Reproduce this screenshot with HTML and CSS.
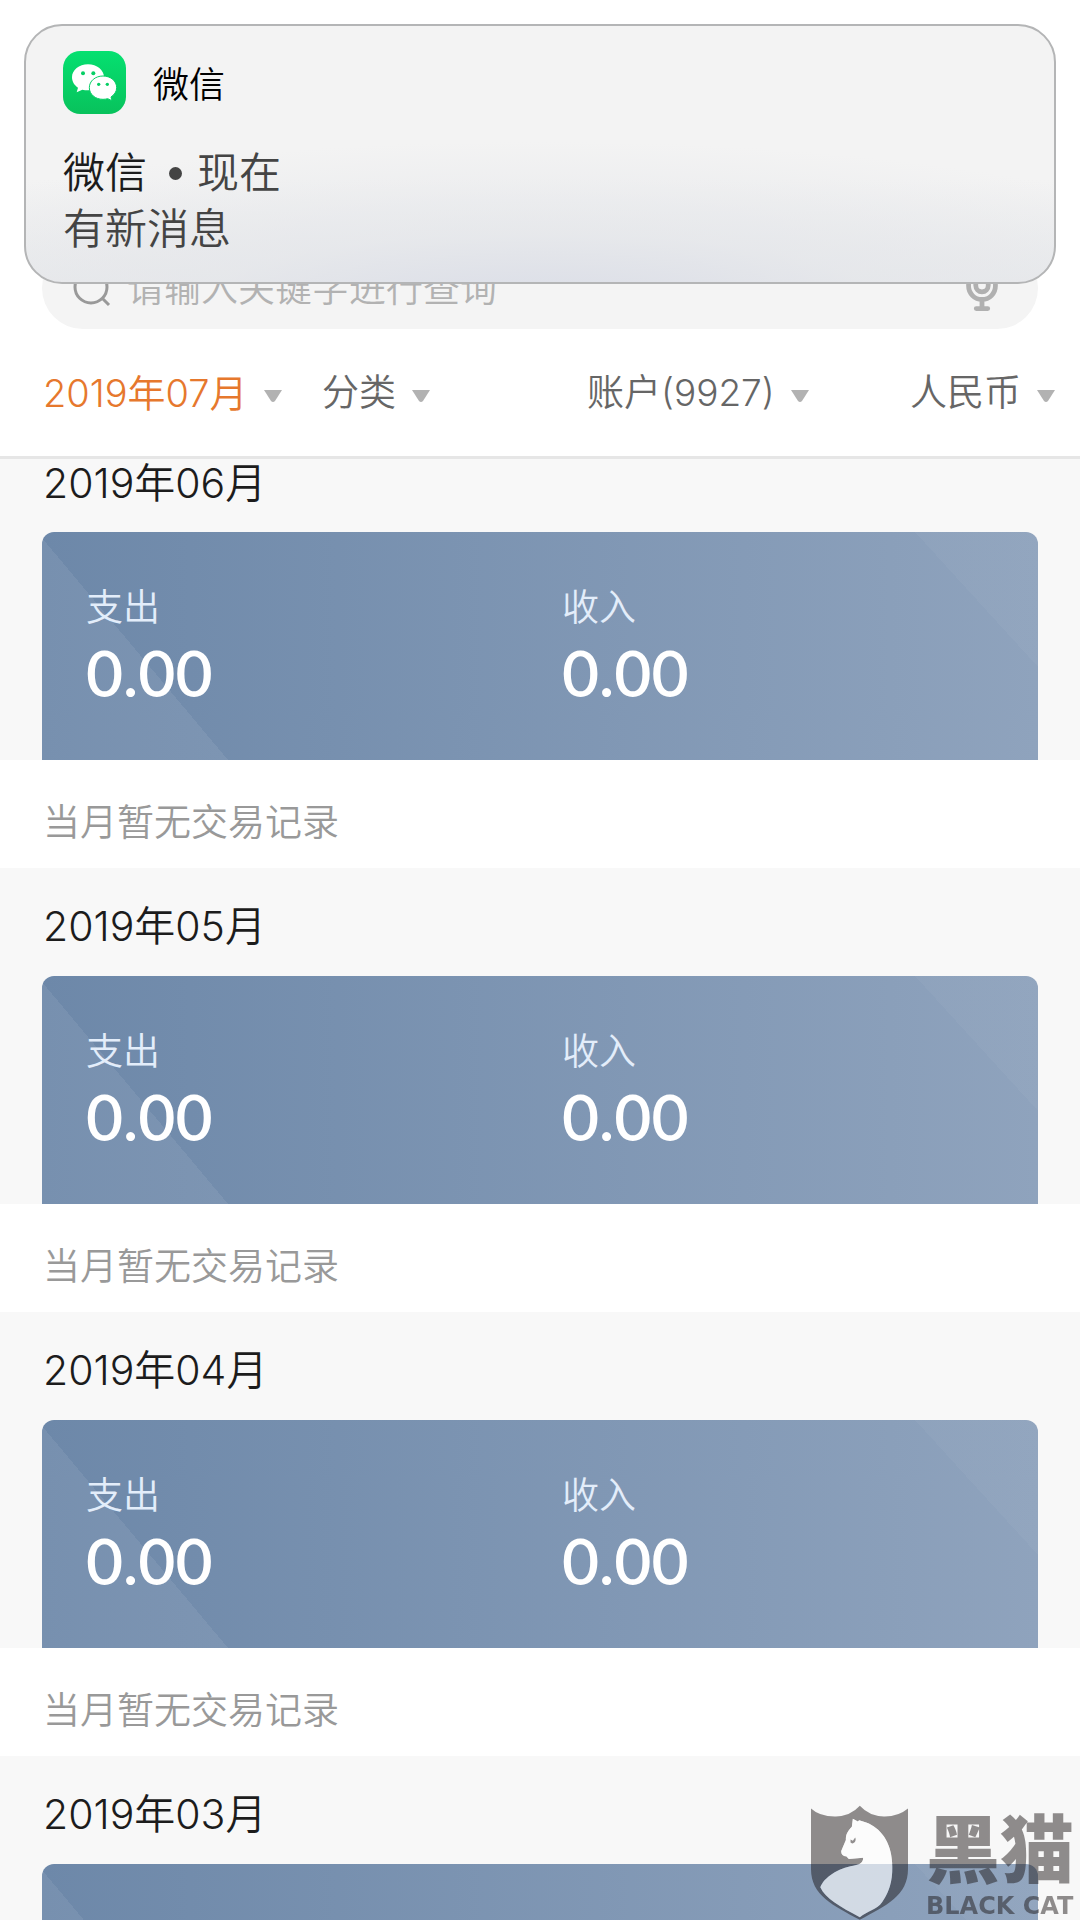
FILE: index.html
```html
<!DOCTYPE html>
<html lang="zh-CN">
<head>
<meta charset="utf-8">
<meta name="viewport" content="width=device-width, initial-scale=1">
<title>收支明细</title>
<link rel="stylesheet" href="styles.css">
</head>
<body>
<div class="app">
  <header class="header">
    <form class="search" role="search">
      <svg class="search-icon" viewBox="0 0 38 38" aria-hidden="true"><circle cx="18" cy="18" r="16"/><path d="M29 29l7 7"/></svg>
      <input class="search-input" type="search" placeholder="请输入关键字进行查询" aria-label="搜索">
      <button class="mic" type="button" aria-label="语音输入">
        <svg viewBox="0 0 32 48" aria-hidden="true"><rect x="9.500" y="2" width="13" height="26" rx="6.500"/><path d="M2 20v2a14 14 0 0 0 28 0v-2M16 36v9M10 45.500h12"/></svg>
      </button>
    </form>
    <nav class="filters">
      <div class="filter filter-active">
        <select aria-label="月份"><option>2019年07月</option></select>
        <svg class="caret" viewBox="0 0 18 12" aria-hidden="true"><path d="M0 0h18l-7 11q-2 2-4 0z"/></svg>
      </div>
      <div class="filter">
        <select aria-label="分类"><option>分类</option></select>
        <svg class="caret" viewBox="0 0 18 12" aria-hidden="true"><path d="M0 0h18l-7 11q-2 2-4 0z"/></svg>
      </div>
      <div class="filter">
        <select aria-label="账户"><option>账户(9927)</option></select>
        <svg class="caret" viewBox="0 0 18 12" aria-hidden="true"><path d="M0 0h18l-7 11q-2 2-4 0z"/></svg>
      </div>
      <div class="filter">
        <select aria-label="币种"><option>人民币</option></select>
        <svg class="caret" viewBox="0 0 18 12" aria-hidden="true"><path d="M0 0h18l-7 11q-2 2-4 0z"/></svg>
      </div>
    </nav>
  </header>

  <main class="months">
    <section class="month">
      <h2>2019年06月</h2>
      <dl class="card">
        <div><dt>支出</dt><dd>0.00</dd></div>
        <div><dt>收入</dt><dd>0.00</dd></div>
      </dl>
      <p class="empty">当月暂无交易记录</p>
    </section>
    <section class="month">
      <h2>2019年05月</h2>
      <dl class="card">
        <div><dt>支出</dt><dd>0.00</dd></div>
        <div><dt>收入</dt><dd>0.00</dd></div>
      </dl>
      <p class="empty">当月暂无交易记录</p>
    </section>
    <section class="month">
      <h2>2019年04月</h2>
      <dl class="card">
        <div><dt>支出</dt><dd>0.00</dd></div>
        <div><dt>收入</dt><dd>0.00</dd></div>
      </dl>
      <p class="empty">当月暂无交易记录</p>
    </section>
    <section class="month">
      <h2>2019年03月</h2>
      <div class="card"></div>
    </section>
  </main>

  <aside class="notice">
    <div class="notice-app">
      <svg class="wechat" viewBox="0 0 189 189" aria-hidden="true">
        <defs><linearGradient id="green" x1="0" y1="0" x2="0" y2="1"><stop offset="0" stop-color="#05e070"/><stop offset="1" stop-color="#08c25c"/></linearGradient></defs>
        <rect width="189" height="189" rx="52" fill="url(#green)"/>
        <path fill="#fff" d="M75 40c-27 0-48 17-48 39 0 13 7 24 18 31l-4 14 17-8c5 1 11 2 17 2 27 0 48-17 48-39S102 40 75 40z"/>
        <path fill="#fff" stroke="#07cf65" stroke-width="3" d="M120 75c-23 0-41 15-41 35s18 35 41 35c5 0 10-1 14-2l13 6-3-11c10-7 17-16 17-28 0-20-18-35-41-35z"/>
        <g fill="#07cf65"><circle cx="60" cy="67" r="6"/><circle cx="91" cy="67" r="6"/><circle cx="107" cy="100" r="5"/><circle cx="133" cy="100" r="5"/></g>
      </svg>
      <span>微信</span>
    </div>
    <div class="notice-text">
      <div class="notice-title"><strong>微信</strong><i class="dot"></i><span>现在</span></div>
      <div>有新消息</div>
    </div>
  </aside>

  <div class="watermark">
    <svg class="shield" viewBox="93 73 292 345" aria-hidden="true">
      <path class="shield-body" fill-rule="evenodd" d="M93 83Q120 108 168 107Q212 106 240 75Q268 106 312 107Q355 108 385 83V265C385 345 320 375 240 418C160 375 93 345 93 265ZM219 114L216 138C199 156 198 165 198 178L184 211C184 223 190 226 199 227L207 235L250 231C250 248 237 252 220 255C175 262 132 290 121 320C137 355 180 378 240 410C264 390 292 388 307 365C335 325 340 285 337 243C334 185 303 141 259 125L238 118L234 122Z"/>
      <path class="shield-cat" d="M219 114L216 138C199 156 198 165 198 178L184 211C184 223 190 226 199 227L207 235L250 231C250 248 237 252 220 255C175 262 132 290 121 320C137 355 180 378 240 410C264 390 292 388 307 365C335 325 340 285 337 243C334 185 303 141 259 125L238 118L234 122Z"/>
      <path class="shield-body" d="M212 176l7 4 7-10c4 9-1 17-9 18l-5-3z"/>
    </svg>
    <div class="brand"><span class="brand-cn">黑猫</span><span class="brand-en">BLACK CAT</span></div>
  </div>
</div>
</body>
</html>
```
FILE: styles.css
```css
* { box-sizing: border-box; }

body {
  margin: 0;
  background: #fff;
  font-family: Inter, "Noto Sans CJK SC", sans-serif;
  font-weight: 350;
  color: #1c1c1c;
}

.app {
  position: relative;
  display: flex;
  flex-direction: column;
  height: 100vh;
  overflow: hidden;
}

.header {
  flex: none;
  padding-top: 247px;
  border-bottom: 3px solid #e6e6e6;
  background: #fff;
}

.search {
  display: flex;
  align-items: center;
  gap: 16px;
  height: 82px;
  margin: 0 42px;
  padding: 0 40px 0 31px;
  border-radius: 41px;
  background: #f4f4f4;
}

.search-icon {
  flex: none;
  width: 38px;
  height: 38px;
  fill: none;
  stroke: #999;
  stroke-width: 3;
}

.search-input {
  flex: 1;
  min-width: 0;
  padding: 0;
  border: 0;
  outline: 0;
  background: none;
  font: inherit;
  font-size: 37px;
}

.search-input::placeholder { color: #b2b2b2; opacity: 1; }

.mic {
  display: flex;
  padding: 0;
  border: 0;
  background: none;
}

.mic svg {
  width: 32px;
  height: 46px;
  fill: none;
  stroke: #b0b0b0;
  stroke-width: 5;
  stroke-linecap: round;
}

.filters {
  display: grid;
  grid-template-columns: 279fr 265fr 323fr 145fr;
  align-items: center;
  height: 127px;
  padding: 0 25px 0 43px;
}

.filter {
  display: flex;
  align-items: center;
  gap: 16px;
  color: #666;
}

.filter-active { color: #e6782d; }

.filter select {
  flex: none;
  appearance: none;
  padding: 0;
  border: 0;
  background: none;
  color: inherit;
  font: inherit;
  font-size: 37px;
}

.filter-active select { font-size: 38px; }

.caret {
  flex: none;
  width: 18px;
  height: 12px;
  margin-top: 6px;
  fill: #b2b2b2;
}

.months {
  flex: 1;
  min-height: 0;
  overflow-y: auto;
  scrollbar-width: none;
  background: #f8f8f8;
}

.month h2 {
  margin: 0;
  padding: 28px 43px 20px;
  font-size: 41px;
  font-weight: 350;
  line-height: 60px;
}

.month:first-child h2 {
  padding: 0 43px 25px;
  line-height: 48px;
}

.card {
  display: grid;
  grid-template-columns: 1fr 1fr;
  height: 228px;
  margin: 0 42px;
  padding: 54px 0 0 44px;
  border-radius: 12px 12px 0 0;
  color: #fff;
  background:
    linear-gradient(to top right, rgba(255, 255, 255, .07) 50%, transparent 50%) left bottom / 186px 222px no-repeat,
    linear-gradient(to top right, transparent 50%, rgba(255, 255, 255, .03) 50%) right top / 123px 135px no-repeat,
    linear-gradient(to right, #6d88a9, #8fa3bd);
}

.card dt {
  color: #e3edfa;
  font-size: 37px;
  line-height: 44px;
}

.card dd {
  margin: 3px 0 0;
  font-family: Lato, sans-serif;
  font-size: 64px;
  font-weight: 600;
  line-height: 80px;
}

.empty {
  margin: 0;
  padding: 41px 43px 23px;
  background: #fff;
  color: #999;
  font-size: 37px;
  line-height: 44px;
}

.notice {
  position: absolute;
  top: 24px;
  left: 24px;
  right: 24px;
  height: 260px;
  padding: 25px 37px;
  border: 2px solid #b4b5b6;
  border-radius: 38px;
  background:
    radial-gradient(ellipse 75% 65% at 50% 110%, #dadde7, rgba(228, 230, 234, .7) 45%, transparent),
    linear-gradient(#f3f3f3 60%, #e9eaec);
}

.notice-app {
  display: flex;
  align-items: flex-start;
  gap: 27px;
  color: #000;
  font-size: 36px;
  line-height: 63px;
}

.notice-app span { padding-top: 3px; }

.wechat { width: 63px; height: 63px; }

.notice-text {
  margin-top: 28px;
  color: #444;
  font-size: 42px;
  line-height: 56px;
}

.notice-title { display: flex; align-items: center; }

.notice-title strong { color: #1c1c1c; font-weight: 350; }

.dot {
  width: 13px;
  height: 13px;
  margin: 0 15px 0 22px;
  border-radius: 50%;
  background: #444;
}

.watermark {
  position: absolute;
  right: 3px;
  bottom: 0;
  display: flex;
  align-items: flex-end;
  gap: 18px;
  color: rgba(24, 18, 18, .47);
  pointer-events: none;
}

.shield { width: 97px; height: 115px; }
.shield-body { fill: rgba(24, 18, 18, .47); }
.shield-cat { fill: rgba(255, 255, 255, .62); }

.brand {
  display: flex;
  flex-direction: column;
  width: 151px;
}

.brand-cn {
  font-size: 74px;
  font-weight: 900;
  line-height: 84px;
}

.brand-en {
  font-family: "DejaVu Sans", sans-serif;
  font-size: 24px;
  font-weight: 700;
  line-height: 28px;
  white-space: nowrap;
}
```
